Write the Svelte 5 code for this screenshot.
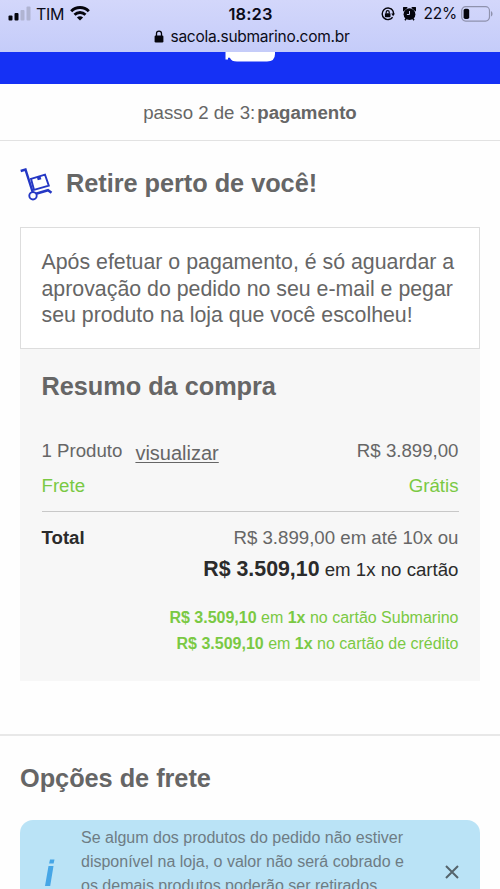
<script>
  const offers = ['no cartão Submarino', 'no cartão de crédito'];
</script>

<div class="screen">
  <header class="browser">
    <div class="status">
      <div class="left">
        <svg width="23" height="15" viewBox="0 0 23 15">
          <rect x="0.5" y="9.5" width="4" height="5" rx="1" fill="#05050c" />
          <rect x="6.5" y="7" width="4" height="7.5" rx="1" fill="#05050c" />
          <rect x="12.5" y="4" width="4" height="10.5" rx="1" fill="#b0b4d2" />
          <rect x="18.5" y="0.5" width="4" height="14" rx="1" fill="#b0b4d2" />
        </svg>
        <span class="carrier">TIM</span>
        <svg class="wifi" width="20" height="15" viewBox="0 0 20 15" fill="none" stroke="#05050c" stroke-width="2.9">
          <path d="M1.200 5.200C6.200.2 13.800.2 18.800 5.200" />
          <path d="M4.500 8.800c3.200-3 7.800-3 11 0" />
          <path d="M10 14.500 6.900 11.400c1.800-1.500 4.400-1.500 6.200 0z" fill="#05050c" stroke="none" />
        </svg>
      </div>
      <span class="clock">18:23</span>
      <div class="right">
        <svg width="14" height="14" viewBox="0 0 14 14" fill="none" stroke="#05050c">
          <path d="M11.400 3A5.800 5.800 0 1 0 11.600 10.300M9.800 1.600a5.800 5.800 0 0 1 2.600 5.600" stroke-width="1.400" />
          <path d="M10.200 6.600h3.800l-1.900 2.700z" fill="#05050c" stroke="none" />
          <rect x="3.900" y="6.200" width="5.600" height="4" rx=".6" fill="#05050c" stroke="none" />
          <path d="M5.200 6.500V5.100a1.500 1.500 0 0 1 3 0v1.400" stroke-width="1.200" />
        </svg>
        <svg class="alarm" width="13" height="14" viewBox="0 0 13 14">
          <path d="M.6 3.300A2 2 0 0 1 3.600.7zM12.400 3.300A2 2 0 0 0 9.400.7zM2 13.200l1.800-2.600M11 13.200l-1.800-2.600" fill="#05050c" stroke="#05050c" stroke-width="1.500" />
          <circle cx="6.500" cy="7.200" r="5.900" fill="#05050c" />
          <path d="M6.500 4v3.500H3.900" fill="none" stroke="#c3c8ec" stroke-width="1" />
        </svg>
        <span class="percent">22%</span>
        <svg class="battery" width="32" height="16" viewBox="0 0 32 16">
          <rect x=".7" y=".7" width="27.800" height="14.400" rx="4" fill="none" stroke="#8f92ad" stroke-width="1.200" />
          <rect x="2.600" y="2.700" width="5.600" height="10.400" rx="1.800" fill="#05050c" />
          <path d="M30 5.300c2 .6 2 4.600 0 5.200z" fill="#8f92ad" />
        </svg>
      </div>
    </div>
    <div class="address">
      <svg width="10" height="13" viewBox="0 0 10 13">
        <rect x=".6" y="5.500" width="8.800" height="7" rx="1.200" fill="#05050c" />
        <path d="M2.500 6V3.600a2.500 2.500 0 0 1 5 0V6" fill="none" stroke="#05050c" stroke-width="1.300" />
      </svg>
      <span>sacola.submarino.com.br</span>
    </div>
  </header>

  <div class="brand">
    <svg width="50" height="10" viewBox="0 0 50 10">
      <path d="M.5 0H50V2Q50 9.500 42 9.500H12Q6.500 9.500 5 6L4 5.500 3 6V7.500H.5z" fill="#fff" />
    </svg>
  </div>

  <div class="step"><span>passo 2 de 3:</span><b>pagamento</b></div>

  <main>
    <div class="pickup">
      <svg width="33" height="33" viewBox="0 0 33 33" fill="none" stroke="#2437c4" stroke-width="1.900">
        <path d="M.7 3 5.500 1.600 12.800 24.500" stroke-width="2.400" />
        <path d="M11 10.800 25 6.600 28.800 17.600 14 21.800z" />
        <path d="M16.800 9.200l1 3 3.600-1-1-3z" fill="#2437c4" stroke="none" />
        <path d="M16 25.800 28 22.200l3.500 2.600" stroke-width="2.500" />
        <circle cx="13" cy="27.800" r="3.700" />
      </svg>
      <h2>Retire perto de você!</h2>
    </div>

    <p class="notice">
      <span>Após efetuar o pagamento, é só aguardar a</span>
      <span>aprovação do pedido no seu e-mail e pegar</span>
      <span>seu produto na loja que você escolheu!</span>
    </p>

    <section class="summary">
      <h2>Resumo da compra</h2>
      <div class="row product">
        <div class="count"><span>1 Produto</span><a href="#produtos">visualizar</a></div>
        <span>R$ 3.899,00</span>
      </div>
      <div class="row shipping"><span>Frete</span><span>Grátis</span></div>
      <div class="row total"><b>Total</b><span>R$ 3.899,00 em até 10x ou</span></div>
      <div class="cash"><b>R$ 3.509,10</b> em 1x no cartão</div>
      <div class="offers">
        {#each offers as offer}
          <div><b>R$ 3.509,10</b> em <b>1x</b> {offer}</div>
        {/each}
      </div>
    </section>
  </main>

  <section class="options">
    <h2>Opções de frete</h2>
    <div class="info">
      <svg class="i" width="11" height="28" viewBox="0 0 11 28" fill="#46a6e6">
        <path d="M6 .5h4.500l-.9 4H5.100zM4.500 7h5L6.200 27H1z" />
      </svg>
      <p>
        <span>Se algum dos produtos do pedido não estiver</span>
        <span>disponível na loja, o valor não será cobrado e</span>
        <span>os demais produtos poderão ser retirados</span>
      </p>
      <svg class="close" width="14" height="14" viewBox="0 0 14 14" stroke="#55646c" stroke-width="2">
        <path d="M1 1l12 12M13 1 1 13" />
      </svg>
    </div>
  </section>
</div>

<style>
  :global(body) { margin: 0; }
  .screen {
    width: 500px;
    height: 889px;
    overflow: hidden;
    background: #fefefe;
    color: #666;
    font-family: "Liberation Sans", Arial, sans-serif;
  }
  h2, p { margin: 0; }
  h2 { font-size: 25.330px; line-height: 30px; font-weight: 700; letter-spacing: -.04px; white-space: nowrap; }
  svg { display: block; flex: none; }
  .browser {
    box-sizing: border-box;
    height: 52px;
    background: linear-gradient(#d3d7fb, #c5ccf9);
    color: #0b0b18;
    font-family: Inter, sans-serif;
  }
  .status {
    display: grid;
    grid-template-columns: 1fr auto 1fr;
    height: 27px;
    padding: 0 7px 0 8px;
    align-items: center;
  }
  .left, .right { display: flex; align-items: center; }
  .right { justify-content: flex-end; }
  .carrier { margin-left: 5px; font-size: 16px; letter-spacing: -.3px; }
  .wifi { margin-left: 6px; }
  .clock { font-size: 16.500px; font-weight: 600; letter-spacing: .1px; }
  .alarm { margin-left: 8px; }
  .percent { margin-left: 7px; font-size: 15.500px; letter-spacing: -.2px; }
  .battery { margin-left: 4px; }
  .address {
    display: flex;
    justify-content: center;
    align-items: center;
    gap: 7px;
    height: 18px;
    font-size: 15.500px;
    letter-spacing: -.28px;
    padding-left: 3px;
  }
  .brand { height: 32px; background: #1531f5; display: flex; padding-left: 225px; }
  .step {
    box-sizing: border-box;
    height: 57px;
    border-bottom: 1px solid #e2e2e2;
    display: flex;
    justify-content: center;
    gap: 2px;
    font-size: 18.670px;
    line-height: 57px;
  }
  main { padding: 0 20px; }
  .pickup { display: flex; align-items: center; height: 86px; gap: 13px; }
  .pickup h2 { margin-top: -2px; }
  .notice {
    box-sizing: border-box;
    height: 122px;
    border: 1px solid #ddd;
    background: #fff;
    padding: 21px 20px 0 20.500px;
    font-size: 21.330px;
    line-height: 26.670px;
  }
  .notice span, .info p span { display: block; white-space: nowrap; }
  .summary {
    box-sizing: border-box;
    height: 332px;
    padding: 22px 21.500px 0;
    background: #f7f7f7;
    font-size: 18.670px;
  }
  .row { display: flex; justify-content: space-between; white-space: nowrap; }
  .product { margin-top: 33px; height: 35px; line-height: 34px; }
  .count { display: flex; gap: 13px; }
  .count a { padding-top: 2px; color: inherit; font-size: 20px; text-underline-offset: 2px; text-decoration-thickness: 1px; }
  .shipping { height: 42px; line-height: 34px; color: #7ac943; border-bottom: 1px solid #c8c8c8; }
  .total { height: 41px; line-height: 52px; }
  .total b { color: #2b2b2b; }
  .cash { height: 34px; line-height: 32px; text-align: right; color: #2b2b2b; white-space: nowrap; }
  .cash b { font-size: 21.330px; }
  .offers { margin-top: 17.500px; text-align: right; color: #7ac943; font-size: 16px; line-height: 26.670px; white-space: nowrap; }
  .options { margin-top: 53px; border-top: 2px solid #e8e8e8; padding: 27px 20px 0; }
  .info {
    display: flex;
    height: 108px;
    margin-top: 27px;
    border-radius: 13px;
    background: #bae3f6;
    color: #6e7c84;
  }
  .i { margin: 39px 0 0 24px; }
  .info p { width: 326px; margin-left: 26px; padding-top: 6px; font-size: 16px; line-height: 24px; }
  .close { margin: 45px 0 0 38px; }
</style>
